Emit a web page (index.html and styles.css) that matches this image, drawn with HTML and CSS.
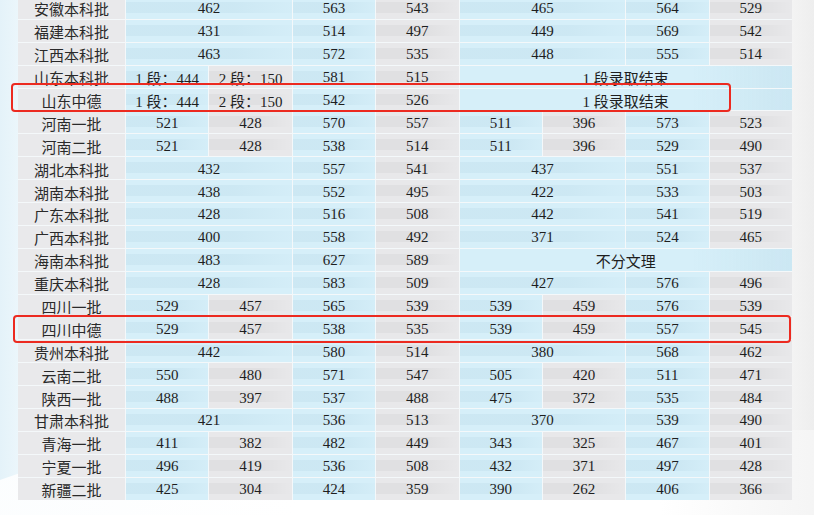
FILE: index.html
```html
<!DOCTYPE html>
<html lang="zh">
<head>
<meta charset="utf-8">
<link rel="stylesheet" href="styles.css">
</head>
<body>
<div class="page">
  <div class="wave"></div>
  <div class="table">
    <div class="n">安徽本科批</div><div class="b s2">462</div><div class="b">563</div><div class="g">543</div><div class="b s2">465</div><div class="b">564</div><div class="g">529</div>
    <div class="n">福建本科批</div><div class="b s2">431</div><div class="b">514</div><div class="g">497</div><div class="b s2">449</div><div class="b">569</div><div class="g">542</div>
    <div class="n">江西本科批</div><div class="b s2">463</div><div class="b">572</div><div class="g">535</div><div class="b s2">448</div><div class="b">555</div><div class="g">514</div>
    <div class="n">山东本科批</div><div class="b">1 段：444</div><div class="g">2 段：150</div><div class="b">581</div><div class="g">515</div><div class="b s4">1 段录取结束</div>
    <div class="n">山东中德</div><div class="b">1 段：444</div><div class="g">2 段：150</div><div class="b">542</div><div class="g">526</div><div class="b s4">1 段录取结束</div>
    <div class="n">河南一批</div><div class="b">521</div><div class="g">428</div><div class="b">570</div><div class="g">557</div><div class="b">511</div><div class="g">396</div><div class="b">573</div><div class="g">523</div>
    <div class="n">河南二批</div><div class="b">521</div><div class="g">428</div><div class="b">538</div><div class="g">514</div><div class="b">511</div><div class="g">396</div><div class="b">529</div><div class="g">490</div>
    <div class="n">湖北本科批</div><div class="b s2">432</div><div class="b">557</div><div class="g">541</div><div class="b s2">437</div><div class="b">551</div><div class="g">537</div>
    <div class="n">湖南本科批</div><div class="b s2">438</div><div class="b">552</div><div class="g">495</div><div class="b s2">422</div><div class="b">533</div><div class="g">503</div>
    <div class="n">广东本科批</div><div class="b s2">428</div><div class="b">516</div><div class="g">508</div><div class="b s2">442</div><div class="b">541</div><div class="g">519</div>
    <div class="n">广西本科批</div><div class="b s2">400</div><div class="b">558</div><div class="g">492</div><div class="b s2">371</div><div class="b">524</div><div class="g">465</div>
    <div class="n">海南本科批</div><div class="b s2">483</div><div class="b">627</div><div class="g">589</div><div class="b s4">不分文理</div>
    <div class="n">重庆本科批</div><div class="b s2">428</div><div class="b">583</div><div class="g">509</div><div class="b s2">427</div><div class="b">576</div><div class="g">496</div>
    <div class="n">四川一批</div><div class="b">529</div><div class="g">457</div><div class="b">565</div><div class="g">539</div><div class="b">539</div><div class="g">459</div><div class="b">576</div><div class="g">539</div>
    <div class="n">四川中德</div><div class="b">529</div><div class="g">457</div><div class="b">538</div><div class="g">535</div><div class="b">539</div><div class="g">459</div><div class="b">557</div><div class="g">545</div>
    <div class="n">贵州本科批</div><div class="b s2">442</div><div class="b">580</div><div class="g">514</div><div class="b s2">380</div><div class="b">568</div><div class="g">462</div>
    <div class="n">云南二批</div><div class="b">550</div><div class="g">480</div><div class="b">571</div><div class="g">547</div><div class="b">505</div><div class="g">420</div><div class="b">511</div><div class="g">471</div>
    <div class="n">陕西一批</div><div class="b">488</div><div class="g">397</div><div class="b">537</div><div class="g">488</div><div class="b">475</div><div class="g">372</div><div class="b">535</div><div class="g">484</div>
    <div class="n">甘肃本科批</div><div class="b s2">421</div><div class="b">536</div><div class="g">513</div><div class="b s2">370</div><div class="b">539</div><div class="g">490</div>
    <div class="n">青海一批</div><div class="b">411</div><div class="g">382</div><div class="b">482</div><div class="g">449</div><div class="b">343</div><div class="g">325</div><div class="b">467</div><div class="g">401</div>
    <div class="n">宁夏一批</div><div class="b">496</div><div class="g">419</div><div class="b">536</div><div class="g">508</div><div class="b">432</div><div class="g">371</div><div class="b">497</div><div class="g">428</div>
    <div class="n">新疆二批</div><div class="b">425</div><div class="g">304</div><div class="b">424</div><div class="g">359</div><div class="b">390</div><div class="g">262</div><div class="b">406</div><div class="g">366</div>
  </div>
  <div class="mark mark-sd"></div>
  <div class="mark mark-sc"></div>
</div>
</body>
</html>
```

FILE: styles.css
```css
html, body {
  margin: 0;
  padding: 0;
}

body {
  background: #ffffff;
}

.page {
  position: relative;
  width: 814px;
  height: 515px;
  overflow: hidden;
  background: linear-gradient(to right, #e4f2f9 0, #ebf6fb 18px, #ffffff 50%, #f6f6f6 96%, #eeeeee 100%);
}

.wave {
  position: absolute;
  left: -60px;
  top: 430px;
  width: 900px;
  height: 200px;
  border-radius: 50% 0 0 0;
  background: linear-gradient(to right, #fbfdfe, #ffffff 40%, #ffffff 80%, #f3f3f3);
}

.table {
  position: relative;
  display: grid;
  grid-template-columns: 107px repeat(8, 1fr);
  grid-auto-rows: 21.9px;
  gap: 1px;
  width: 774px;
  margin: -3px 0 0 18px;
  background: #f4f8fa;
  font-family: "Liberation Serif", "Noto Sans CJK SC", serif;
  font-size: 15px;
  color: #1e1e1e;
}

.table > div {
  display: flex;
  align-items: center;
  justify-content: center;
  padding-top: 2px;
  white-space: nowrap;
}

.n {
  background: #e9e9eb;
  font-family: "Noto Sans CJK SC", sans-serif;
  color: #2a2a2a;
}

.b {
  background:
    linear-gradient(to right, rgba(110, 160, 185, 0.09) 0, rgba(110, 160, 185, 0.09) 65%, rgba(110, 160, 185, 0.02) 100%) 0 5px / 100% 11px no-repeat,
    #d6eff9;
}

.g {
  background:
    linear-gradient(to right, rgba(0, 0, 0, 0.035) 0, rgba(0, 0, 0, 0.035) 60%, rgba(0, 0, 0, 0) 100%) 0 5px / 100% 11px no-repeat,
    #e8e8ea;
}

.s2 {
  grid-column: span 2;
}

.s4 {
  grid-column: span 4;
}

.s4.b {
  background:
    linear-gradient(to right, rgba(110, 160, 185, 0) 0, rgba(110, 160, 185, 0) 70%, rgba(110, 160, 185, 0.1) 100%),
    #d6eff9;
}

.mark {
  position: absolute;
  border: 2.5px solid #ec2a20;
  border-radius: 4px;
}

.mark-sd {
  left: 11px;
  top: 83px;
  width: 716px;
  height: 25px;
}

.mark-sc {
  left: 13px;
  top: 315px;
  width: 774px;
  height: 24px;
}
```
